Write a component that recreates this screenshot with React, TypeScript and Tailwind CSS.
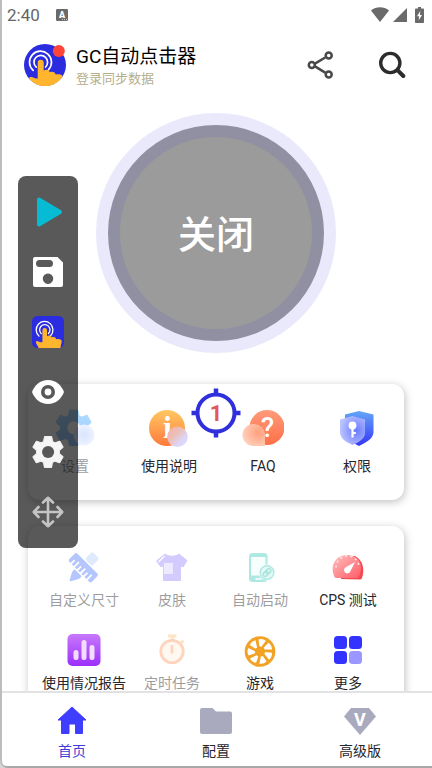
import React from 'react';

interface TileProps {
  label: string;
  icon: React.ReactNode;
  disabled?: boolean;
}

const HandArt: React.FC = () => (
  <>
    <g fill="none" stroke="#fff" strokeWidth="1.7" strokeLinecap="round">
      <path d="M9.2 26.4A11 11 0 1 1 24.6 25.6" />
      <path d="M12.2 23.2A6.8 6.8 0 1 1 21.6 23" />
    </g>
    <path
      fill="#ffb62e"
      d="M6 37C4.5 34 5 32.5 7.5 33C9.5 33.2 10.5 35 13.7 34.5V18.8a3 3 0 0 1 6 0V26.6C22 25 25 25.4 25.8 28.2C28.6 27 31 28 31.8 30.6C34.8 29.4 39.5 30.5 39 33.8C38.6 37 37.5 38 37.4 42H8.5C8.5 40 7 39 6 37z"
    />
  </>
);

const AppLogo: React.FC = () => (
  <svg className="w-[42px] h-[42px]" viewBox="0 0 42 42" overflow="visible">
    <clipPath id="logoClip">
      <circle cx="21" cy="21" r="21" />
    </clipPath>
    <g clipPath="url(#logoClip)">
      <rect width="42" height="42" fill="#2b2be0" />
      <HandArt />
      <path d="M5 35H39V42H5z" fill="#ffb62e" />
    </g>
    <circle cx="34.8" cy="7" r="6" fill="#ff4438" />
  </svg>
);

const WifiIcon: React.FC = () => (
  <svg className="w-[18px] h-4" viewBox="0 0 18 16" fill="#6a6a6a">
    <path d="M0 3.4C5-.7 13-.7 18 3.4L9 15z" />
  </svg>
);

const SignalIcon: React.FC = () => (
  <svg className="w-3.5 h-4" viewBox="0 0 14 16" fill="#6a6a6a">
    <path d="M14 1V15H0z" />
  </svg>
);

const BatteryIcon: React.FC = () => (
  <svg className="w-[9px] h-4" viewBox="0 0 9 16">
    <path d="M3 0H6V1.6H8.2a.8.8 0 0 1 .8.8V15.2a.8.8 0 0 1-.8.8H.8a.8.8 0 0 1-.8-.8V2.4a.8.8 0 0 1 .8-.8H3z" fill="#6a6a6a" />
    <path d="M5.3 4 2 9.2H4.1L3.7 13.2 7 8H4.9z" fill="#fff" />
  </svg>
);

const AutofillIcon: React.FC = () => (
  <svg className="w-3 h-3" viewBox="0 0 12 12">
    <rect width="12" height="12" rx="1.2" fill="#6a6a6a" />
    <text x="6" y="9" textAnchor="middle" fontSize="9" fontWeight="900" fill="#fff">A</text>
    <path d="M6 10.6H11" stroke="#fff" strokeWidth=".7" strokeDasharray="1 1" />
  </svg>
);

const ShareIcon: React.FC = () => (
  <svg className="w-7 h-7" viewBox="0 0 28 28" fill="none" stroke="#484848" strokeWidth="2.5">
    <path d="M9 12.6 19.2 6.5M9 15.4 19.2 21.6" />
    <circle cx="5.8" cy="14" r="3" />
    <circle cx="22.7" cy="4.6" r="3" />
    <circle cx="22.7" cy="23.4" r="3" />
  </svg>
);

const SearchIcon: React.FC = () => (
  <svg className="w-7 h-7" viewBox="0 0 28 28" fill="none" stroke="#2c2c2c">
    <circle cx="12.3" cy="12" r="9.6" strokeWidth="3.4" />
    <path d="M19.5 19.2 25.3 25" strokeWidth="4" strokeLinecap="round" />
  </svg>
);

const gearPath =
  'M11.2 0h7.6l1 5.2 2.6 1.5 5-1.8L31 11.4 27 14.9v3L31 21.4l-3.8 6.5-5-1.8-2.6 1.5-.9 5.2h-7.6l-1-5.2-2.6-1.5-5 1.8L-1.2 21.4l4-3.5v-3l-4-3.5L2.6 4.9l5 1.8 2.6-1.5z';

const PlayIcon: React.FC = () => (
  <svg className="w-8 h-8" viewBox="0 0 32 32">
    <path d="M7 3.5 28 16 7 28.5z" fill="#06bcd4" stroke="#06bcd4" strokeWidth="4" strokeLinejoin="round" />
  </svg>
);

const SaveIcon: React.FC = () => (
  <svg className="w-8 h-8" viewBox="0 0 32 32">
    <path
      fillRule="evenodd"
      fill="#fff"
      d="M3 1H25.5L31 6.5V29a2 2 0 0 1-2 2H3a2 2 0 0 1-2-2V3a2 2 0 0 1 2-2zM7.5 4a3.5 3.5 0 0 0 0 7H17.5a3.5 3.5 0 0 0 0-7zM16 17.5a5.2 5.2 0 1 0 .01 0z"
    />
  </svg>
);

const HandTile: React.FC = () => (
  <svg className="w-8 h-8" viewBox="0 0 42 42">
    <rect width="42" height="42" rx="7" fill="#2b2be0" />
    <HandArt />
  </svg>
);

const EyeIcon: React.FC = () => (
  <svg className="w-8 h-8" viewBox="0 0 32 32">
    <path d="M16 4C24 4 29.5 9.5 32 16 29.5 22.5 24 28 16 28S2.5 22.5 0 16C2.5 9.5 8 4 16 4z" fill="#fff" />
    <circle cx="16" cy="16" r="5.2" fill="none" stroke="#585858" strokeWidth="3.6" />
  </svg>
);

const GearIcon: React.FC = () => (
  <svg className="w-8 h-8" viewBox="-2 -0.5 33.8 33.8">
    <path d={gearPath} fill="#f5f5f5" stroke="#f5f5f5" strokeLinejoin="round" />
    <circle cx="15" cy="16.4" r="6.4" fill="#575757" />
  </svg>
);

const MoveIcon: React.FC = () => (
  <svg className="w-8 h-8" viewBox="0 0 32 32" fill="none" stroke="#c4c4c4" strokeWidth="2.6" strokeLinecap="round" strokeLinejoin="round">
    <path d="M16 2V30M2 16H30M11 6.5 16 1.8 21 6.5M11 25.5 16 30.2 21 25.5M6.5 11 1.8 16 6.5 21M25.5 11 30.2 16 25.5 21" />
  </svg>
);

const SettingsArt: React.FC = () => (
  <svg className="w-10 h-10" viewBox="0 0 40 40">
    <defs>
      <linearGradient id="gearBlue" x1="0" y1="0" x2="0" y2="1">
        <stop offset="0" stopColor="#55b4ff" />
        <stop offset="1" stopColor="#2787ff" />
      </linearGradient>
      <radialGradient id="gearGlass">
        <stop offset="0" stopColor="#a9c4ff" />
        <stop offset="1" stopColor="#d9e6ff" />
      </radialGradient>
    </defs>
    <g transform="translate(2.5 2) scale(1.08)">
      <path d={gearPath} fill="url(#gearBlue)" stroke="url(#gearBlue)" strokeLinejoin="round" />
      <circle cx="15" cy="16.4" r="6" fill="#fff" />
    </g>
    <circle cx="29" cy="27" r="10.5" fill="url(#gearGlass)" />
  </svg>
);

const InfoArt: React.FC = () => (
  <svg className="w-10 h-10" viewBox="0 0 40 40">
    <defs>
      <linearGradient id="infoOrange" x1="0" y1="0" x2="0" y2="1">
        <stop offset="0" stopColor="#ffc862" />
        <stop offset="1" stopColor="#ff7a3c" />
      </linearGradient>
      <linearGradient id="infoGlass" x1="0" y1="0" x2="1" y2="1">
        <stop offset="0" stopColor="#f0b2a6" />
        <stop offset=".4" stopColor="#ecbfb8" />
        <stop offset=".7" stopColor="#dcd6f8" />
        <stop offset="1" stopColor="#dedcff" />
      </linearGradient>
    </defs>
    <circle cx="18" cy="20" r="18" fill="url(#infoOrange)" />
    <text x="18.5" y="30" textAnchor="middle" fontFamily="Liberation Serif, serif" fontSize="32" fontWeight="700" fill="#fff">i</text>
    <circle cx="28.5" cy="28.8" r="10.3" fill="url(#infoGlass)" />
  </svg>
);

const FaqArt: React.FC = () => (
  <svg className="w-[42px] h-10" viewBox="0 0 42 40">
    <defs>
      <linearGradient id="faqRed" x1="0" y1="0" x2="0" y2="1">
        <stop offset="0" stopColor="#ff9a7a" />
        <stop offset="1" stopColor="#ff7048" />
      </linearGradient>
      <radialGradient id="faqGlass" cx=".7" cy=".4" r=".7">
        <stop offset="0" stopColor="#ff9f7c" />
        <stop offset="1" stopColor="#ffd0bb" />
      </radialGradient>
    </defs>
    <circle cx="25" cy="19.5" r="17.5" fill="url(#faqRed)" />
    <text x="25.5" y="29" textAnchor="middle" fontSize="27" fontWeight="500" fill="#fff">?</text>
    <path d="M11.5 16A11.5 11.5 0 0 1 23 27.5V38H11.5A11 11 0 0 1 11.5 16z" fill="url(#faqGlass)" />
  </svg>
);

const ShieldArt: React.FC = () => (
  <svg className="w-10 h-10" viewBox="0 0 40 40">
    <defs>
      <linearGradient id="shieldBlue" x1="0" y1="0" x2="0" y2="1">
        <stop offset="0" stopColor="#64a6f8" />
        <stop offset="1" stopColor="#3636f8" />
      </linearGradient>
      <radialGradient id="shieldGlass" cx=".65" cy=".5" r=".65">
        <stop offset="0" stopColor="#6a7cff" />
        <stop offset="1" stopColor="#bcc4ff" />
      </radialGradient>
    </defs>
    <path d="M22 3 36.5 6.5V24C36.5 31 28 35 22 38 16 35 8 31 8 24V6.500z" fill="url(#shieldBlue)" />
    <path d="M15.5 8 28 11.500V25C28 31 21 34.500 15.500 37 9.500 34 3 31 3 24V11.500z" fill="url(#shieldGlass)" />
    <circle cx="15.5" cy="17.5" r="3.9" fill="#fff" />
    <path d="M15.5 20V29.5M15.5 25H18.8" stroke="#fff" strokeWidth="2.2" />
  </svg>
);

const RulerArt: React.FC = () => (
  <svg className="w-9 h-9" viewBox="0 0 36 36">
    <g transform="rotate(45 17.5 17.5)">
      <rect x="12.5" y="0" width="10" height="10.5" rx="2" fill="#bcd2ff" />
      <path d="M12.5 25H22.5V28.500L18.500 36Q17.500 37.500 16.500 36L12.500 28.500z" fill="#5a82fb" />
      <rect x="1.5" y="12" width="32" height="11.5" rx="2" fill="#5a82fb" />
      <path d="M6 24V18.500M10.500 24V17M15 24V18.500M19.500 24V17M24 24V18.500M28.500 24V17" stroke="#fff" strokeWidth="1.8" />
    </g>
  </svg>
);

const ShirtArt: React.FC = () => (
  <svg className="w-9 h-9" viewBox="0 0 36 36">
    <path d="M11 4C14 7 22 7 25 4L33 10.5 29 17 26.5 15.5V30.5H9.5V15.5L7 17 2.5 11z" fill="#a08cfb" stroke="#a08cfb" strokeLinejoin="round" />
    <path d="M4.5 12 10.5 6" stroke="#fff" strokeWidth="1.5" />
    <rect x="10" y="13" width="9" height="11" fill="#d8d2ff" />
  </svg>
);

const PhoneArt: React.FC = () => (
  <svg className="w-9 h-9" viewBox="0 0 36 36">
    <rect x="7" y="3" width="18.5" height="29" rx="3.5" fill="#4dcebf" />
    <rect x="9" y="7" width="14.5" height="18.5" fill="#effffc" />
    <path d="M13.5 29H19.5" stroke="#fff" strokeWidth="1.5" />
    <circle cx="25" cy="22.5" r="8" fill="#f2fffd" />
    <circle cx="25" cy="22.5" r="6.8" fill="#c8f1eb" stroke="#55cdbf" strokeWidth="1.5" />
    <g fill="none" stroke="#42c5b5" strokeWidth="1.5" transform="rotate(-45 25 22.5)">
      <rect x="20.5" y="20.5" width="5.500" height="4" rx="2" />
      <rect x="24" y="20.5" width="5.500" height="4" rx="2" />
    </g>
  </svg>
);

const GaugeArt: React.FC = () => (
  <svg className="w-9 h-9" viewBox="0 0 36 36">
    <defs>
      <linearGradient id="gaugePink" x1="0" y1="0" x2="1" y2="1">
        <stop offset="0" stopColor="#ffc0c0" />
        <stop offset="1" stopColor="#ff5c66" />
      </linearGradient>
    </defs>
    <path d="M11 29C12 14 18 7 25 6C33 10 35 20 32 28Q31.5 29.5 30 29.5z" fill="#f4484f" />
    <path d="M4.5 27C-1 15 6 5 17.5 5S34 15 29 27Q28.5 28 27 28H7Q5 28 4.5 27z" fill="url(#gaugePink)" />
    <path d="M6 17.5A11.5 11.5 0 0 1 29 17.5" fill="none" stroke="#fff" strokeWidth="1.5" strokeDasharray="2 3.2" strokeOpacity=".8" />
    <path d="M25 12 20.5 21A3.3 3.3 0 1 1 16 17z" fill="#fff" />
  </svg>
);

const ReportArt: React.FC = () => (
  <svg className="w-9 h-9" viewBox="0 0 36 36">
    <defs>
      <linearGradient id="reportPurple" x1="0" y1="0" x2="0" y2="1">
        <stop offset="0" stopColor="#c879fb" />
        <stop offset="1" stopColor="#9b2ffb" />
      </linearGradient>
    </defs>
    <rect x="1.5" y="1" width="33" height="32" rx="5" fill="url(#reportPurple)" />
    <path d="M10 19.5V24.5M18 9.5V24.5M26 14.5V24.5" stroke="#f3ddff" strokeWidth="5" strokeLinecap="round" />
  </svg>
);

const TimerArt: React.FC = () => (
  <svg className="w-9 h-9" viewBox="0 0 36 36">
    <path d="M14 3H22.5M18.5 3V7M27 10 29.5 7.5" stroke="#ffc27a" strokeWidth="3" />
    <circle cx="18" cy="18.5" r="11.2" fill="#fff0e0" stroke="#ffa06c" strokeWidth="2.8" />
    <path d="M18 12V20.5" stroke="#ffa06c" strokeWidth="2.6" />
  </svg>
);

const GameArt: React.FC = () => (
  <svg className="w-9 h-9" viewBox="0 0 36 36">
    <circle cx="18" cy="18.5" r="15.3" fill="#f2a225" />
    <g fill="#fff">
      {[10, 61, 113, 164, 216, 267, 319].map((angle) => (
        <path key={angle} d="M16.5 13.5 14.5 7Q18 5 22 7L18.5 13.5z" transform={`rotate(${angle} 18 18.5)`} />
      ))}
    </g>
    <circle cx="18" cy="18.5" r="4" fill="#f2a225" />
  </svg>
);

const MoreArt: React.FC = () => (
  <svg className="w-9 h-9" viewBox="0 0 36 36" fill="#3333ff">
    <rect x="4" y="3" width="13" height="13" rx="3.5" />
    <rect x="19" y="3" width="13" height="13" rx="3.5" />
    <rect x="4" y="18" width="13" height="13" rx="3.5" />
    <rect x="19" y="18" width="13" height="13" rx="3.5" fill="#9a98ff" />
  </svg>
);

const HomeIcon: React.FC = () => (
  <svg className="w-8 h-8" viewBox="0 0 32 32">
    <path d="M16 2 30 15H26.5V28.5H19.5V19H13V28.5H5.5V15H2z" fill="#3f3dff" stroke="#3f3dff" strokeLinejoin="round" />
  </svg>
);

const FolderIcon: React.FC = () => (
  <svg className="w-8 h-8" viewBox="0 0 32 32">
    <path d="M2 3H12.5L16 6.5H30a2 2 0 0 1 2 2V27a2 2 0 0 1-2 2H2a2 2 0 0 1-2-2V5a2 2 0 0 1 2-2z" fill="#aaaabf" />
  </svg>
);

const PremiumIcon: React.FC = () => (
  <svg className="w-8 h-8" viewBox="0 0 32 32">
    <path d="M7 3H25L32 11.5 16 30 0 11.5z" fill="#aaaabf" />
    <text x="16" y="20.5" textAnchor="middle" fontSize="18" fontWeight="700" fill="#fff">V</text>
  </svg>
);

const shortcuts: TileProps[] = [
  { label: '设置', icon: <SettingsArt />, disabled: true },
  { label: '使用说明', icon: <InfoArt /> },
  { label: 'FAQ', icon: <FaqArt /> },
  { label: '权限', icon: <ShieldArt /> },
];

const features: TileProps[] = [
  { label: '自定义尺寸', icon: <RulerArt />, disabled: true },
  { label: '皮肤', icon: <ShirtArt />, disabled: true },
  { label: '自动启动', icon: <PhoneArt />, disabled: true },
  { label: 'CPS 测试', icon: <GaugeArt /> },
  { label: '使用情况报告', icon: <ReportArt /> },
  { label: '定时任务', icon: <TimerArt />, disabled: true },
  { label: '游戏', icon: <GameArt /> },
  { label: '更多', icon: <MoreArt /> },
];

const tools = [
  { label: '开始', icon: <PlayIcon /> },
  { label: '保存', icon: <SaveIcon /> },
  { label: '点击', icon: <HandTile /> },
  { label: '显示', icon: <EyeIcon /> },
  { label: '设置', icon: <GearIcon /> },
  { label: '移动', icon: <MoveIcon /> },
];

const tabs = [
  { label: '首页', icon: <HomeIcon />, active: true },
  { label: '配置', icon: <FolderIcon />, active: false },
  { label: '高级版', icon: <PremiumIcon />, active: false },
];

const Tile: React.FC<TileProps> = ({ label, icon, disabled }) => (
  <button
    type="button"
    disabled={disabled}
    className={`flex flex-col items-center text-sm leading-4 whitespace-nowrap text-[#26262c] ${disabled ? 'opacity-45' : ''}`}
  >
    {icon}
    {label}
  </button>
);

export default function App() {
  return (
    <div className="relative h-screen bg-[#d6d6d6] overflow-hidden font-['Roboto','Noto_Sans_CJK_SC',sans-serif]">
      <div className="h-full flex flex-col bg-white border-b-2 border-[#a8a8a8] rounded-bl-lg overflow-hidden">
        {/* Status bar */}
        <div className="h-[30px] shrink-0 flex items-center pl-[7px] pr-2 text-[#666666]">
          <span className="text-[17px] leading-5">2:40</span>
          <span className="ml-4"><AutofillIcon /></span>
          <div className="ml-auto flex items-center">
            <WifiIcon />
            <span className="ml-1 mr-2"><SignalIcon /></span>
            <BatteryIcon />
          </div>
        </div>

        {/* Header */}
        <header className="h-[70px] shrink-0 flex items-center pl-6 pr-[26px]">
          <AppLogo />
          <div className="ml-2.5 pt-1 flex flex-col">
            <h1 className="text-[19px] leading-6 text-black">GC自动点击器</h1>
            <a href="#login" className="text-[13px] leading-5 text-[#b5ae8c]">登录同步数据</a>
          </div>
          <div className="ml-auto flex items-center gap-11">
            <button type="button" aria-label="分享"><ShareIcon /></button>
            <button type="button" aria-label="搜索"><SearchIcon /></button>
          </div>
        </header>

        <main className="flex-1 min-h-0 overflow-hidden px-7 pt-[13px]">
          <button
            type="button"
            className="mx-auto flex w-60 h-60 rounded-full bg-[#eae9fb] p-3"
          >
            <span className="flex w-full h-full rounded-full bg-[#9190a3] p-3">
              <span className="flex w-full h-full items-center justify-center rounded-full bg-[#9b9b9b] pt-1 text-[38px] leading-10 font-medium text-white">
                关闭
              </span>
            </span>
          </button>

          <section className="mt-[31px] grid grid-cols-4 rounded-xl bg-white pt-6 pb-[26px] shadow-[1px_2px_8px_rgba(0,0,0,0.25)] [&>button]:gap-2.5">
            {shortcuts.map((item) => (
              <Tile key={item.label} {...item} />
            ))}
          </section>

          <section className="mt-[26px] grid grid-cols-4 gap-y-[25px] rounded-xl bg-white px-3 pt-6 pb-8 shadow-[1px_2px_8px_rgba(0,0,0,0.25)] [&>button]:gap-1.5">
            {features.map((item) => (
              <Tile key={item.label} {...item} />
            ))}
          </section>
        </main>

        {/* Bottom tabs */}
        <nav className="relative shrink-0 grid grid-cols-3 border-t-2 border-[#e2e2e4] bg-white pt-3 pb-[5px]">
          {tabs.map((tab) => (
            <button
              key={tab.label}
              type="button"
              className={`flex flex-col items-center text-sm leading-5 ${tab.active ? 'text-[#3f3dd8]' : 'text-[#26262c]'}`}
            >
              {tab.icon}
              <span className="mt-1">{tab.label}</span>
            </button>
          ))}
        </nav>
      </div>

      {/* Click target */}
      <div className="absolute left-1/2 top-[388px] -translate-x-1/2">
        <svg className="w-[50px] h-[50px]" viewBox="0 0 50 50">
          <circle cx="25" cy="25" r="18.5" fill="#fff" stroke="#2f2fdc" strokeWidth="4" />
          <path d="M25 .5V6M25 44V49.5M.5 25H6M44 25H49.5" stroke="#2f2fdc" strokeWidth="4.5" />
        </svg>
        <span className="absolute inset-0 flex items-center justify-center pt-0.5 text-[22px] leading-6 font-bold text-[#e05a5a]">1</span>
      </div>

      {/* Floating toolbar */}
      <div className="absolute left-[18px] top-44 flex flex-col rounded-lg bg-black/65 py-1.5">
        {tools.map((tool) => (
          <button key={tool.label} type="button" aria-label={tool.label} className="flex w-[60px] h-[60px] items-center justify-center">
            {tool.icon}
          </button>
        ))}
      </div>

      {/* Window edge */}
      <div className="absolute inset-0 rounded-bl-lg border-l-2 border-[#bdbdbd] pointer-events-none" />
    </div>
  );
}
